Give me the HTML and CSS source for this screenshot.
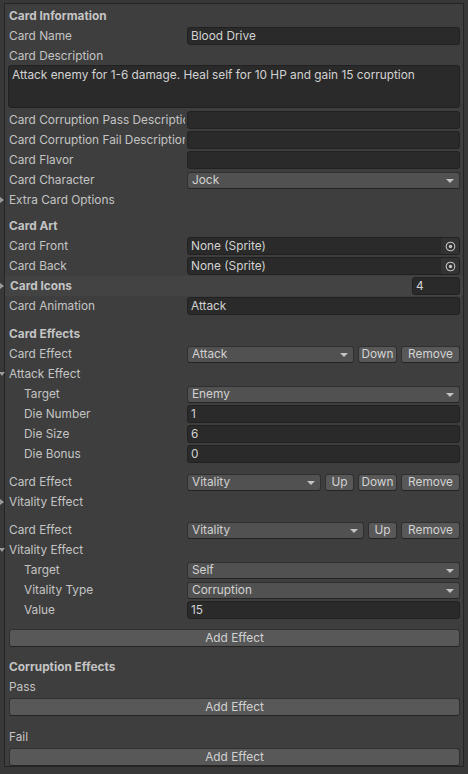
FILE: index.html
```html
<!DOCTYPE html>
<html>
<head>
<meta charset="utf-8">
<link rel="stylesheet" href="styles.css">
</head>
<body>
<div class="panel">
  <div class="hdr first">Card Information</div>
  <div class="row"><span class="lbl">Card Name</span><div class="field text">Blood Drive</div></div>
  <div class="row desc"><span class="lbl">Card Description</span></div>
  <div class="textarea">Attack enemy for 1-6 damage. Heal self for 10 HP and gain 15 corruption</div>
  <div class="row"><span class="lbl">Card Corruption Pass Description</span><div class="field text"></div></div>
  <div class="row"><span class="lbl">Card Corruption Fail Description</span><div class="field text"></div></div>
  <div class="row"><span class="lbl">Card Flavor</span><div class="field text"></div></div>
  <div class="row"><span class="lbl">Card Character</span><div class="field popup">Jock<span class="arrow"></span></div></div>
  <div class="row"><span class="lbl fold closed">Extra Card Options</span></div>

  <div class="hdr gap6">Card Art</div>
  <div class="row"><span class="lbl">Card Front</span><div class="field obj"><span class="objtext">None (Sprite)</span><span class="picker"><svg width="11" height="11" viewBox="0 0 11 11"><circle cx="5.5" cy="5.5" r="4.3" fill="none" stroke="#c4c4c4" stroke-width="1.1"/><circle cx="5.5" cy="5.5" r="1.7" fill="#c4c4c4"/></svg></span></div></div>
  <div class="row"><span class="lbl">Card Back</span><div class="field obj"><span class="objtext">None (Sprite)</span><span class="picker"><svg width="11" height="11" viewBox="0 0 11 11"><circle cx="5.5" cy="5.5" r="4.3" fill="none" stroke="#c4c4c4" stroke-width="1.1"/><circle cx="5.5" cy="5.5" r="1.7" fill="#c4c4c4"/></svg></span></div></div>
  <div class="row band"><span class="lbl fold closed bold">Card Icons</span><span class="spacer"></span><div class="field text intf">4</div></div>
  <div class="row"><span class="lbl">Card Animation</span><div class="field text">Attack</div></div>

  <div class="hdr gap8">Card Effects</div>
  <div class="row"><span class="lbl">Card Effect</span><div class="field popup grow">Attack<span class="arrow"></span></div><div class="btn down">Down</div><div class="btn remove">Remove</div></div>
  <div class="row"><span class="lbl fold open">Attack Effect</span></div>
  <div class="row"><span class="lbl ind">Target</span><div class="field popup">Enemy<span class="arrow"></span></div></div>
  <div class="row"><span class="lbl ind">Die Number</span><div class="field text">1</div></div>
  <div class="row"><span class="lbl ind">Die Size</span><div class="field text">6</div></div>
  <div class="row"><span class="lbl ind">Die Bonus</span><div class="field text">0</div></div>

  <div class="row gap8"><span class="lbl">Card Effect</span><div class="field popup grow">Vitality<span class="arrow"></span></div><div class="btn up">Up</div><div class="btn down">Down</div><div class="btn remove">Remove</div></div>
  <div class="row"><span class="lbl fold closed">Vitality Effect</span></div>

  <div class="row gap8"><span class="lbl">Card Effect</span><div class="field popup grow">Vitality<span class="arrow"></span></div><div class="btn up">Up</div><div class="btn remove">Remove</div></div>
  <div class="row"><span class="lbl fold open">Vitality Effect</span></div>
  <div class="row"><span class="lbl ind">Target</span><div class="field popup">Self<span class="arrow"></span></div></div>
  <div class="row"><span class="lbl ind">Vitality Type</span><div class="field popup">Corruption<span class="arrow"></span></div></div>
  <div class="row"><span class="lbl ind">Value</span><div class="field text">15</div></div>

  <div class="row gap8"><div class="btn wide">Add Effect</div></div>

  <div class="hdr gap9">Corruption Effects</div>
  <div class="row"><span class="lbl">Pass</span></div>
  <div class="row"><div class="btn wide">Add Effect</div></div>
  <div class="row gap10"><span class="lbl">Fail</span></div>
  <div class="row"><div class="btn wide">Add Effect</div></div>
</div>
</body>
</html>
```

FILE: styles.css
```css
html, body {
  margin: 0;
  padding: 0;
  background: #383838;
}
body {
  width: 468px;
  height: 774px;
  overflow: hidden;
  font-family: Inter, "Noto Sans", sans-serif;
  font-size: 11.85px;
  color: #c4c4c4;
}
.panel {
  margin: 3px 4px 0 4px;
  width: 460px;
  box-sizing: border-box;
  border: 1px solid #242424;
  background: #3e3e3e;
  padding: 2px 3px 0 4px;
  height: 764px;
}
.hdr {
  height: 20px;
  line-height: 20px;
  font-weight: 700;
  color: #c4c4c4;
}
.gap6 { margin-top: 6px; }
.gap8 { margin-top: 8px; }
.gap9 { margin-top: 9px; }
.gap10 { margin-top: 10px; }
.row {
  height: 20px;
  display: flex;
  align-items: center;
  position: relative;
}
.row.desc { height: 19px; align-items: flex-start; line-height: 20px; }
.lbl {
  flex: 0 0 176px;
  width: 176px;
  box-sizing: border-box;
  white-space: nowrap;
  overflow: hidden;
  margin-right: 2px;
  position: relative;
  line-height: 20px;
}
.lbl.ind { padding-left: 15px; }
.lbl.bold { font-weight: 700; padding-left: 1px; }
.fold { overflow: visible; }
.fold::before {
  content: "";
  position: absolute;
  top: 50%;
  width: 0;
  height: 0;
}
.fold.closed::before {
  left: -9px;
  margin-top: -3px;
  border-top: 3px solid transparent;
  border-bottom: 3px solid transparent;
  border-left: 4px solid #9a9a9a;
}
.fold.open::before {
  left: -10px;
  margin-top: -2px;
  border-left: 3.5px solid transparent;
  border-right: 3.5px solid transparent;
  border-top: 4px solid #9a9a9a;
}
.band {
  margin: 0 -3px 0 -4px;
  padding: 0 3px 0 4px;
  background: #434343;
}
.spacer { flex: 1; }
.field {
  flex: 1;
  height: 18px;
  box-sizing: border-box;
  border-radius: 3px;
  line-height: 16px;
  white-space: nowrap;
  overflow: hidden;
  color: #d2d2d2;
}
.field.text {
  background: #2a2a2a;
  border: 1px solid #212121;
  padding-left: 3px;
}
.field.intf {
  flex: 0 0 48px;
  width: 48px;
}
.field.popup {
  background: #515151;
  border: 1px solid #303030;
  border-bottom-color: #242424;
  padding-left: 4px;
  height: 17px;
  line-height: 15px;
  position: relative;
}
.arrow {
  position: absolute;
  right: 5px;
  top: 6px;
  width: 0;
  height: 0;
  border-left: 4px solid transparent;
  border-right: 4px solid transparent;
  border-top: 4px solid #c4c4c4;
}
.field.obj {
  background: #2a2a2a;
  border: 1px solid #212121;
  display: flex;
  padding-left: 3px;
}
.objtext { flex: 1; }
.picker {
  flex: 0 0 18px;
  background: #333333;
  display: flex;
  align-items: center;
  justify-content: center;
  border-radius: 0 2px 2px 0;
}
.btn {
  height: 17px;
  box-sizing: border-box;
  background: #585858;
  border: 1px solid #303030;
  border-bottom-color: #242424;
  border-radius: 3px;
  line-height: 15px;
  text-align: center;
  color: #d2d2d2;
  margin-left: 4px;
}
.btn.up { flex: 0 0 29px; }
.btn.down { flex: 0 0 39px; }
.btn.remove { flex: 0 0 59px; }
.btn.wide { flex: 1; margin-left: 0; height: 18px; line-height: 16px; }
.textarea {
  height: 43px;
  margin-left: -1px;
  box-sizing: border-box;
  background: #2a2a2a;
  border: 1px solid #212121;
  border-radius: 3px;
  padding: 2px 3px;
  line-height: 14px;
  color: #d2d2d2;
  margin-bottom: 2px;
  white-space: nowrap;
  overflow: hidden;
}
```
